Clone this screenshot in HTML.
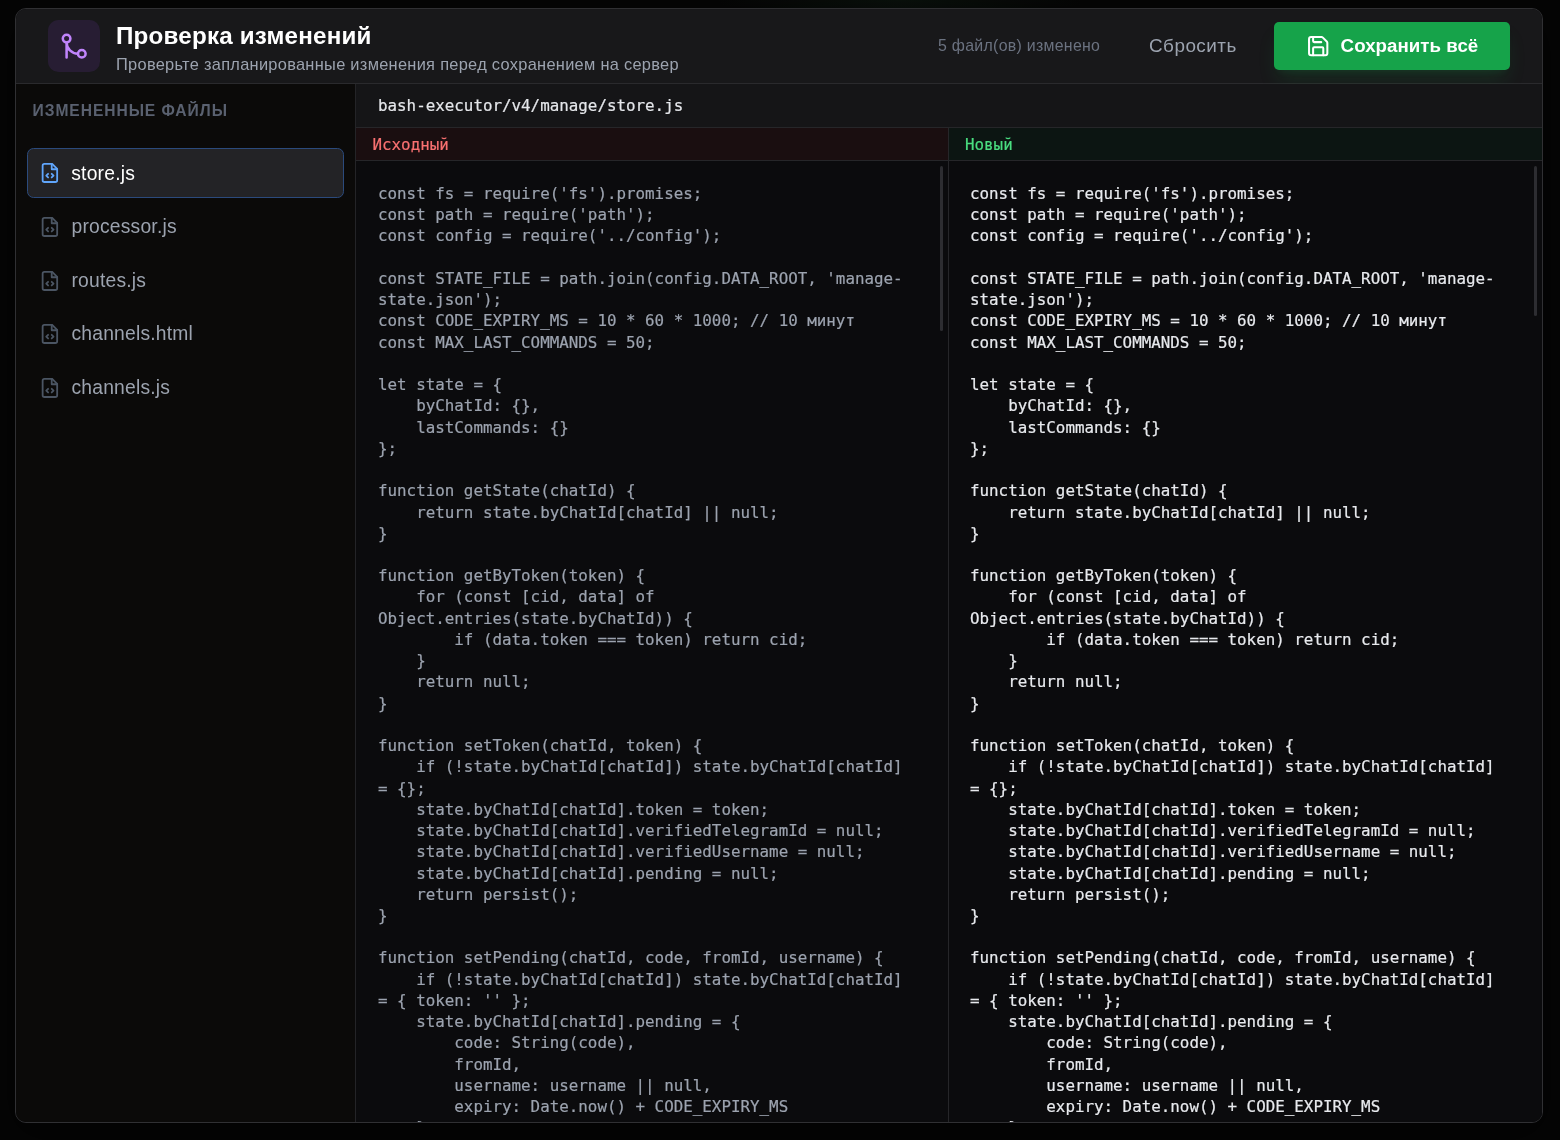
<!DOCTYPE html>
<html lang="ru">
<head>
<meta charset="utf-8">
<title>Проверка изменений</title>
<style>
*{box-sizing:border-box;margin:0;padding:0}
html,body{width:1560px;height:1140px;overflow:hidden;background:#050505;}
body{font-family:"Liberation Sans",sans-serif;color:#e5e7eb;position:relative;
  background:
   radial-gradient(ellipse 260px 60px at 900px 0px, rgba(20,40,25,.35), transparent 70%),
   #050505;}
.modal{will-change:transform;position:absolute;left:15px;top:8px;width:1527.7px;height:1115px;border:1.5px solid #303033;border-radius:11px;background:#0b0b0c;overflow:hidden;box-shadow:0 10px 40px rgba(0,0,0,.6)}
.hdr{position:absolute;left:0;top:0;right:0;height:74.5px;background:#18181a;border-bottom:1.5px solid #2a2a2d}
.ico{position:absolute;left:32.4px;top:10.9px;width:51.5px;height:52px;border-radius:10.6px;background:#271d33}
.ico svg{position:absolute;left:10.6px;top:10.9px;width:30.4px;height:30.4px}
.ttl{position:absolute;left:100px;top:11.7px;font-weight:700;font-size:24.2px;line-height:30px;color:#fff;white-space:nowrap;letter-spacing:.2px}
.sub{position:absolute;left:100px;top:44.5px;font-size:16.4px;line-height:20px;color:#9ca3af;white-space:nowrap;letter-spacing:.29px}
.cnt{position:absolute;left:922px;top:26.6px;font-size:15.9px;line-height:20px;color:#6b7280;white-space:nowrap;letter-spacing:.29px}
.rst{position:absolute;left:1133px;top:24.9px;font-size:18.9px;line-height:24px;color:#9ca3af;white-space:nowrap;letter-spacing:.47px}
.save{position:absolute;left:1258px;top:12.5px;width:236px;height:48px;border-radius:5px;background:#16a34a;box-shadow:0 13px 20px -4px rgba(22,163,74,.16),0 5px 8px -5px rgba(22,163,74,.16);color:#fff;font-weight:700;font-size:18.7px;letter-spacing:.05px;white-space:nowrap}
.save svg{position:absolute;left:31.9px;top:12.4px;width:24.4px;height:24.4px}
.save span{position:absolute;left:66.6px;top:12.5px;line-height:24px}
.side{position:absolute;left:0;top:74.5px;width:340px;bottom:0;background:#0b0a09;border-right:1.5px solid #242427}
.sh{position:absolute;left:16.5px;top:17.3px;font-size:15.6px;line-height:20px;font-weight:700;letter-spacing:.95px;color:#5a6170;white-space:nowrap}
.it{position:absolute;left:11.2px;width:316.8px;height:50.5px;border-radius:7px;font-size:19.3px;letter-spacing:.2px;color:#9ca3af}
.it.sel{height:49.9px;border-radius:6.5px;background:#232326;border:1.5px solid #2b4a7c;color:#fff}
.it svg{position:absolute;left:11.7px;top:14.4px;width:21.8px;height:21.8px}
.it.sel svg{left:10.7px;top:13px}
.it span{position:absolute;left:44.3px;top:13px;line-height:24px;white-space:nowrap}
.it.sel span{left:43.1px;top:12.6px}
.main{position:absolute;left:340px;top:74.5px;right:0;bottom:0;background:#0b0b0d}
.path{position:absolute;left:0;top:0;right:0;height:44px;background:#151517;border-bottom:1.5px solid #262629;font-family:"DejaVu Sans Mono","Liberation Mono",monospace;font-size:15.85px;line-height:20px;color:#e5e7eb;padding:12.8px 0 0 22px;-webkit-text-stroke:.2px currentColor;white-space:nowrap}
.ph{position:absolute;top:44px;height:33px;font-family:"DejaVu Sans Mono","Liberation Mono",monospace;font-size:15.85px;line-height:20px;padding:7.4px 0 0 16.5px;-webkit-text-stroke:.2px currentColor;border-bottom:1.5px solid #262629;white-space:nowrap}
.ph.l{left:0;width:592.5px;background:#1a0e10;color:#f87171;border-right:1.5px solid #262629}
.ph.r{left:592.5px;right:0;background:#0c1512;color:#4ade80}
.pane{position:absolute;top:77px;bottom:0;overflow:hidden;background:#0b0b0d}
.pane.l{left:0;width:592.5px;border-right:1.5px solid #262629}
.pane.r{left:592.5px;right:0}
pre{position:absolute;left:22px;top:22.6px;font-family:"DejaVu Sans Mono","Liberation Mono",monospace;font-size:15.85px;line-height:21.23px;white-space:pre;will-change:transform;-webkit-text-stroke:.2px currentColor}
.pane.l pre{--c:#9ca3af;color:var(--c)}
.pane.r pre{--c:#e8eaee;color:var(--c);left:21.5px}
.sb{position:absolute;width:3px;border-radius:2px;background:#2d2d31}
</style>
</head>
<body>
<div class="modal">
  <div class="hdr">
    <div class="ico"><svg viewBox="0 0 24 24" fill="none" stroke="#c084fc" stroke-width="2" stroke-linecap="round" stroke-linejoin="round"><circle cx="18" cy="18" r="3"/><circle cx="6" cy="6" r="3"/><path d="M6 21V9a9 9 0 0 0 9 9"/></svg></div>
    <div class="ttl">Проверка изменений</div>
    <div class="sub">Проверьте запланированные изменения перед сохранением на сервер</div>
    <div class="cnt">5 файл(ов) изменено</div>
    <div class="rst">Сбросить</div>
    <div class="save"><svg viewBox="0 0 24 24" fill="none" stroke="#fff" stroke-width="2" stroke-linecap="round" stroke-linejoin="round"><path d="M15.2 3a2 2 0 0 1 1.4.6l3.8 3.8a2 2 0 0 1 .6 1.4V19a2 2 0 0 1-2 2H5a2 2 0 0 1-2-2V5a2 2 0 0 1 2-2z"/><path d="M17 21v-7a1 1 0 0 0-1-1H8a1 1 0 0 0-1 1v7"/><path d="M7 3v4a1 1 0 0 0 1 1h7"/></svg><span>Сохранить всё</span></div>
  </div>
  <div class="side">
    <div class="sh">ИЗМЕНЕННЫЕ ФАЙЛЫ</div>
    <div class="it sel" style="top:64.7px"><svg viewBox="0 0 24 24" fill="none" stroke="#60a5fa" stroke-width="2" stroke-linecap="round" stroke-linejoin="round"><path d="M14.5 2H6a2 2 0 0 0-2 2v16a2 2 0 0 0 2 2h12a2 2 0 0 0 2-2V7.5L14.5 2z"/><polyline points="14 2 14 8 20 8"/><path d="m10 13-2 2 2 2"/><path d="m14 17 2-2-2-2"/></svg><span>store.js</span></div>
    <div class="it" style="top:118px"><svg viewBox="0 0 24 24" fill="none" stroke="#4b5563" stroke-width="2" stroke-linecap="round" stroke-linejoin="round"><path d="M14.5 2H6a2 2 0 0 0-2 2v16a2 2 0 0 0 2 2h12a2 2 0 0 0 2-2V7.5L14.5 2z"/><polyline points="14 2 14 8 20 8"/><path d="m10 13-2 2 2 2"/><path d="m14 17 2-2-2-2"/></svg><span>processor.js</span></div>
    <div class="it" style="top:172.2px"><svg viewBox="0 0 24 24" fill="none" stroke="#4b5563" stroke-width="2" stroke-linecap="round" stroke-linejoin="round"><path d="M14.5 2H6a2 2 0 0 0-2 2v16a2 2 0 0 0 2 2h12a2 2 0 0 0 2-2V7.5L14.5 2z"/><polyline points="14 2 14 8 20 8"/><path d="m10 13-2 2 2 2"/><path d="m14 17 2-2-2-2"/></svg><span>routes.js</span></div>
    <div class="it" style="top:225.3px"><svg viewBox="0 0 24 24" fill="none" stroke="#4b5563" stroke-width="2" stroke-linecap="round" stroke-linejoin="round"><path d="M14.5 2H6a2 2 0 0 0-2 2v16a2 2 0 0 0 2 2h12a2 2 0 0 0 2-2V7.5L14.5 2z"/><polyline points="14 2 14 8 20 8"/><path d="m10 13-2 2 2 2"/><path d="m14 17 2-2-2-2"/></svg><span>channels.html</span></div>
    <div class="it" style="top:279px"><svg viewBox="0 0 24 24" fill="none" stroke="#4b5563" stroke-width="2" stroke-linecap="round" stroke-linejoin="round"><path d="M14.5 2H6a2 2 0 0 0-2 2v16a2 2 0 0 0 2 2h12a2 2 0 0 0 2-2V7.5L14.5 2z"/><polyline points="14 2 14 8 20 8"/><path d="m10 13-2 2 2 2"/><path d="m14 17 2-2-2-2"/></svg><span>channels.js</span></div>
  </div>
  <div class="main">
    <div class="path">bash-executor/v4/manage/store.js</div>
    <div class="ph l">Исходный</div>
    <div class="ph r">Новый</div>
    <div class="pane l"><pre>const fs = require('fs').promises;
const path = require('path');
const config = require('../config');

const STATE_FILE = path.join(config.DATA_ROOT, 'manage-
state.json');
const CODE_EXPIRY_MS = 10 * 60 * 1000; // 10 минут
const MAX_LAST_COMMANDS = 50;

let state = {
    byChatId: {},
    lastCommands: {}
};

function getState(chatId) {
    return state.byChatId[chatId] || null;
}

function getByToken(token) {
    for (const [cid, data] of
Object.entries(state.byChatId)) {
        if (data.token === token) return cid;
    }
    return null;
}

function setToken(chatId, token) {
    if (!state.byChatId[chatId]) state.byChatId[chatId]
= {};
    state.byChatId[chatId].token = token;
    state.byChatId[chatId].verifiedTelegramId = null;
    state.byChatId[chatId].verifiedUsername = null;
    state.byChatId[chatId].pending = null;
    return persist();
}

function setPending(chatId, code, fromId, username) {
    if (!state.byChatId[chatId]) state.byChatId[chatId]
= { token: '' };
    state.byChatId[chatId].pending = {
        code: String(code),
        fromId,
        username: username || null,
        expiry: Date.now() + CODE_EXPIRY_MS
    };
}</pre><div class="sb" style="right:4.4px;top:5px;height:165px"></div></div>
    <div class="pane r"><pre>const fs = require('fs').promises;
const path = require('path');
const config = require('../config');

const STATE_FILE = path.join(config.DATA_ROOT, 'manage-
state.json');
const CODE_EXPIRY_MS = 10 * 60 * 1000; // 10 минут
const MAX_LAST_COMMANDS = 50;

let state = {
    byChatId: {},
    lastCommands: {}
};

function getState(chatId) {
    return state.byChatId[chatId] || null;
}

function getByToken(token) {
    for (const [cid, data] of
Object.entries(state.byChatId)) {
        if (data.token === token) return cid;
    }
    return null;
}

function setToken(chatId, token) {
    if (!state.byChatId[chatId]) state.byChatId[chatId]
= {};
    state.byChatId[chatId].token = token;
    state.byChatId[chatId].verifiedTelegramId = null;
    state.byChatId[chatId].verifiedUsername = null;
    state.byChatId[chatId].pending = null;
    return persist();
}

function setPending(chatId, code, fromId, username) {
    if (!state.byChatId[chatId]) state.byChatId[chatId]
= { token: '' };
    state.byChatId[chatId].pending = {
        code: String(code),
        fromId,
        username: username || null,
        expiry: Date.now() + CODE_EXPIRY_MS
    };
}</pre><div class="sb" style="right:5.2px;top:5px;height:150.6px"></div></div>
  </div>
</div>
</body>
</html>
